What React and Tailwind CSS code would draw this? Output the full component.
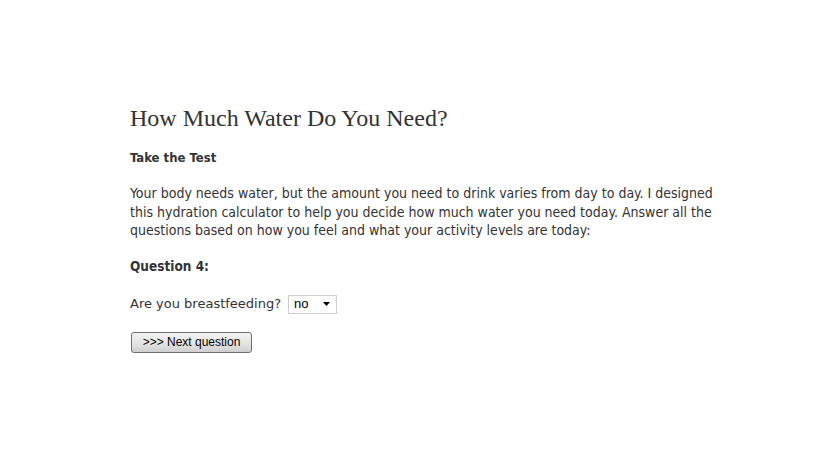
import React from "react";

export default function App() {
  return (
    <div className="min-h-[460px] w-[819px] bg-white text-[#333]">
      <div className="pl-[130px] pt-[104px] w-[730px]">
        <h1 className="text-[24px] leading-[28px] text-[#333] font-normal" style={{ fontFamily: '"Liberation Serif", Georgia, serif' }}>
          How Much Water Do You Need?
        </h1>
        <div style={{ fontFamily: '"DejaVu Sans Condensed", "DejaVu Sans", sans-serif' }} className="text-[14px]">
          <p className="mt-[17px] font-bold leading-[18px] text-[13px]">Take the Test</p>
          <p className="mt-[17px] leading-[18.5px] w-[596px]">
            Your body needs water, but the amount you need to drink varies from day to day. I designed this hydration calculator to help you decide how much water you need today. Answer all the questions based on how you feel and what your activity levels are today:
          </p>
          <p className="mt-[17px] font-bold leading-[18px] text-[13.5px]">Question 4:</p>
          <div className="mt-[20px] flex items-center leading-[18px]">
            <span className="text-[13px]" style={{ fontFamily: '"DejaVu Sans", Verdana, sans-serif' }}>Are you breastfeeding?</span>
            <div className="ml-[7px] flex h-[19px] w-[49px] items-center justify-between border border-[#d0d0d0] bg-white pl-[5px] pr-[5px] text-[13px] text-black" style={{ fontFamily: '"Liberation Sans", Arial, sans-serif' }}>
              <span>no</span>
              <svg width="8" height="4" viewBox="0 0 8 4"><path d="M0 0h7L3.5 4z" fill="#000" /></svg>
            </div>
          </div>
          <button className="mt-[18px] ml-[1px] flex h-[21px] w-[121px] items-center justify-center rounded-[3px] border border-[#707070] bg-gradient-to-b from-[#f2f2f2] via-[#e6e6e6] to-[#cfcfcf] text-[12px] text-black" style={{ fontFamily: '"Liberation Sans", Arial, sans-serif' }}>
            &gt;&gt;&gt; Next question
          </button>
        </div>
      </div>
    </div>
  );
}
